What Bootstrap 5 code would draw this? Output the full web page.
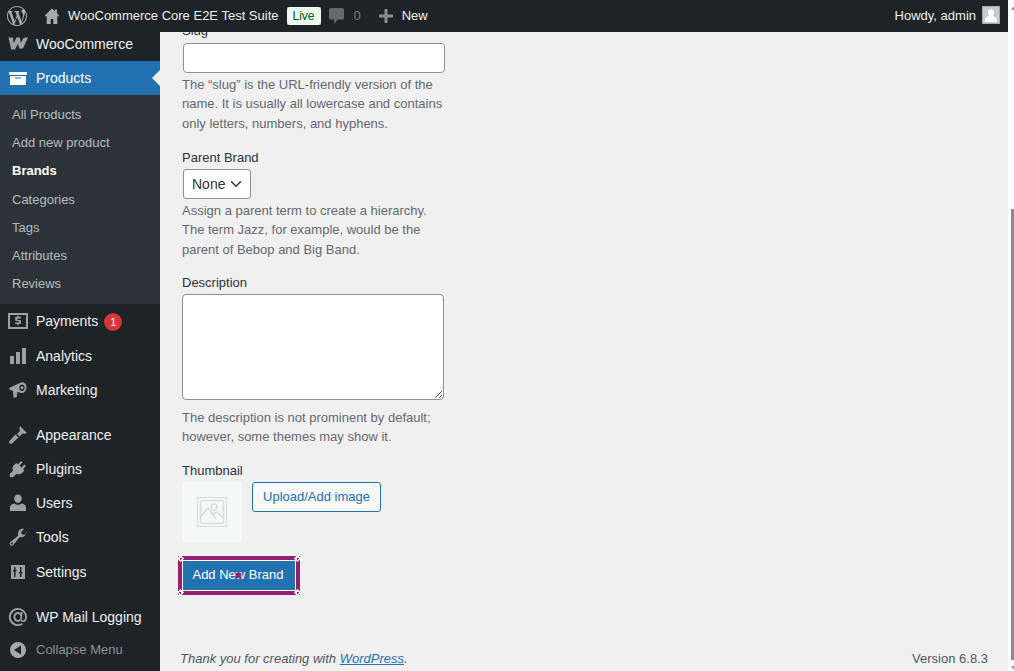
<!DOCTYPE html>
<html lang="en">
<head>
<meta charset="utf-8">
<title>Add New Brand</title>
<link href="https://cdn.jsdelivr.net/npm/bootstrap@5.3.0/dist/css/bootstrap.min.css" rel="stylesheet">
<style>
html,body{height:100%;overflow:hidden}
body{font-family:"Liberation Sans",Arial,sans-serif;font-size:13px;line-height:1.4;background:#f0f0f1;color:#3c434a}
.shell{width:1014px;height:671px}
.page{width:1008px}
.vscroll{width:6px;background:#fff;position:relative}
.vthumb{position:absolute;left:3px;right:0;top:209px;height:451px;background:#8a8a8a}
.varrow{position:absolute;left:3px;width:0;height:0;border-left:3px solid transparent;border-right:3px solid transparent}
.varrow-up{top:6px;border-bottom:4px solid #8a8a8a}
.varrow-down{bottom:1px;border-top:4px solid #8a8a8a}
.wpbar{height:32px;background:#1d2327;color:#f0f0f1;flex:none}
.wpbar svg{fill:#a7aaad;display:block;flex:none}
.bar-logo{margin-left:7px;margin-right:17px}
.bar-home{margin-right:8px}
.wpbar .bar-comment{fill:#646970;margin-left:8px}
.wpbar .bar-plus{fill:#8c8f94;margin-right:9px}
.bar-live{background:#edfaef;color:#005c12;font-size:12px;line-height:18px;height:18px;width:34px;border-radius:2px;text-align:center;margin-left:8px}
.bar-count{color:#787c82;margin-left:9px;margin-right:18px}
.bar-avatar{width:18px;height:18px;margin:0 8px 2px 6px}
.wpside{width:160px;background:#1d2327;flex:none;overflow:hidden}
.side-item{height:34px;color:#f0f0f1;font-size:14px;line-height:34px;text-decoration:none;position:relative}
.side-item svg{fill:#9ca1a6;width:20px;height:20px;margin:0 8px;flex:none}
.side-first{height:29px;line-height:24px;padding-bottom:5px}
.side-tall{height:35px;padding-bottom:2px}
.side-gap{margin-top:11px}
.side-settings{height:35px;padding-top:1px}
.side-current{background:#2271b1;color:#fff}
.side-current svg{fill:#fff}
.side-current::after{content:"";position:absolute;right:0;top:9px;border:8px solid transparent;border-right-color:#f0f0f1;border-left-width:0}
.side-sub{background:#2c3338;padding:6px 0;height:209px}
.side-sub a{display:block;height:28.2px;line-height:28.2px;padding-left:12px;color:rgba(240,246,252,.7);text-decoration:none;font-size:13px}
.side-sub a.side-on{color:#fff;font-weight:600}
.side-count{background:#d63638;color:#fff;font-size:11px;font-weight:400;width:18px;height:18px;line-height:18px;padding:0;margin-left:6px;margin-top:2px;border-radius:9px;text-align:center}
.side-collapse{height:30px;line-height:30px;color:#8c8f94;font-size:13px;margin-top:1px}
.side-collapse svg{fill:#a7aaad}
.wpmain{overflow:hidden;padding-left:22px;position:relative}
.term-form{width:262px;margin-top:-11px}
.term-label{color:#2c3338;font-size:13px;line-height:19.5px;margin:0;display:block}
.term-help{color:#646970;font-size:13px;line-height:19.5px;margin:0}
.term-input{display:block;width:262px;height:30px;margin:2px 0 2px 1px;border:1px solid #8c8f94;border-radius:4px;padding:0 8px;background:#fff;min-height:0;font-size:14px}
.term-select{display:block;width:68px;height:30px;margin:1px 0 2px 1px;border:1px solid #8c8f94;border-radius:3px;padding:2px 24px 0 8px;font-size:14px;color:#2c3338;background-position:right 6px center;background-size:16px 12px}
.term-text{display:block;width:262px;height:106px;margin:1px 0 8px;border:1px solid #8c8f94;border-radius:4px;padding:2px 6px;background:#fff}
.term-thumb{width:60px;height:60px;background:#f6f7f7}
.term-upload{height:30px;width:129px;margin-left:10px;padding:0;font-size:13px;line-height:28px;color:#2271b1;border:1px solid #2271b1;border-radius:3px;background:#f6f7f7}
.hl-wrap{width:122px;height:39px;border:4px solid #93216f;margin:14px 0 0 -4px;position:relative}
.hl-btn{display:block;width:100%;height:100%;padding:0 2px 2px 0;border:1px solid #fff;border-radius:0;background:#2271b1;color:#fff;font-size:13px;line-height:26px}
.hl-dot{position:absolute;left:54px;top:13px;width:5px;height:5px;background:#93216f}
.hl-corner{position:absolute;width:5px;height:5px;background:radial-gradient(circle,#93216f 0 1px,#fff 1px);transform:rotate(45deg)}
.hl-tl{left:-4px;top:-4px}.hl-tr{right:-4px;top:-4px}.hl-bl{left:-4px;bottom:-4px}.hl-br{right:-4px;bottom:-4px}
.wpfoot{position:absolute;left:20px;right:20px;bottom:3px;color:#50575e;font-size:13px;line-height:19.5px}
.wpfoot a{color:#2271b1}
</style>
</head>
<body>
<div class="shell d-flex">
  <div class="page d-flex flex-column">
    <header class="wpbar d-flex align-items-center">
      <svg class="bar-logo" width="20" height="20" viewBox="0 0 24 24"><path d="M21.469 6.825c.84 1.537 1.318 3.3 1.318 5.175 0 3.979-2.156 7.456-5.363 9.325l3.295-9.527c.615-1.54.82-2.771.82-3.864 0-.405-.026-.78-.07-1.11m-7.981.105c.647-.03 1.232-.105 1.232-.105.582-.075.514-.93-.067-.899 0 0-1.755.135-2.88.135-1.064 0-2.85-.15-2.85-.15-.585-.03-.661.855-.075.885 0 0 .54.061 1.125.09l1.68 4.605-2.37 7.08L5.354 6.9c.649-.03 1.234-.1 1.234-.1.585-.075.516-.93-.065-.896 0 0-1.746.138-2.874.138-.2 0-.438-.008-.69-.015C4.911 3.15 8.235 1.215 12 1.215c2.809 0 5.365 1.072 7.286 2.833-.046-.003-.091-.009-.141-.009-1.06 0-1.812.923-1.812 1.914 0 .89.513 1.643 1.06 2.531.411.72.89 1.643.89 2.977 0 .915-.354 1.994-.821 3.479l-1.075 3.585-3.9-11.61.001.014zM12 22.784c-1.059 0-2.081-.153-3.048-.437l3.237-9.406 3.315 9.087c.024.053.05.101.078.149-1.12.393-2.325.609-3.582.609M1.211 12c0-1.564.336-3.05.935-4.39L7.29 21.709C3.694 19.96 1.212 16.271 1.211 12M12 0C5.385 0 0 5.385 0 12s5.385 12 12 12 12-5.385 12-12S18.615 0 12 0"/></svg>
      <svg class="bar-home" width="16" height="16" viewBox="0 0 16 16"><path d="M8 0.500 0.800 7.500l1 1 .9-.8V16h4v-5h2.600v5h4V7.700l.9.8 1-1L13 5.300V1.500h-2v1.800z"/></svg>
      <span>WooCommerce Core E2E Test Suite</span>
      <span class="bar-live">Live</span>
      <svg class="bar-comment" width="16" height="18" viewBox="0 0 16 18"><path d="M1.500 1h12a1.500 1.500 0 0 1 1.500 1.500v8.500a1.500 1.500 0 0 1-1.500 1.500H9L5 17v-4.500H1.500A1.500 1.500 0 0 1 0 11V2.500A1.500 1.500 0 0 1 1.500 1z"/></svg>
      <span class="bar-count">0</span>
      <svg class="bar-plus" width="14" height="14" viewBox="0 0 14 14"><path d="M5.500 0h3v5.500H14v3H8.500V14h-3V8.500H0v-3h5.500z"/></svg>
      <span>New</span>
      <span class="ms-auto">Howdy, admin</span>
      <svg class="bar-avatar" width="18" height="18" viewBox="0 0 18 18"><rect width="18" height="18" fill="#a7aaad"/><rect x="1" y="1" width="16" height="16" fill="#c9c9c9"/><path fill="#fff" d="M9 3.500a3 3 0 0 1 3 3.200c0 1.300-.7 2.400-1.300 3 .2.800 3.300 1.300 4.300 3.300v3H3v-3c1-2 4.100-2.500 4.300-3.300-.6-.6-1.300-1.700-1.300-3a3 3 0 0 1 3-3.200z"/></svg>
    </header>
    <div class="d-flex flex-grow-1" style="min-height:0">
      <nav class="wpside d-flex flex-column">
        <a class="side-item side-first d-flex align-items-center" href="#"><svg viewBox="0 0 20 20"><path d="M.5 3.500h4.300l1 5.700 2.600-5.700h3.500l.9 5.700 1.700-3.700c.6-1.300 1.600-2 3-2h2.500l-5 11h-3.800L10 9.500 7 15.500H3.200z"/></svg>WooCommerce</a>
        <a class="side-item side-current d-flex align-items-center" href="#"><svg viewBox="0 0 20 20"><path fill-rule="evenodd" d="M1 4h18v3H1zM2 8h16v9H2zm5 1.500v1h6v-1z"/></svg>Products</a>
        <div class="side-sub">
          <a href="#">All Products</a>
          <a href="#">Add new product</a>
          <a class="side-on" href="#">Brands</a>
          <a href="#">Categories</a>
          <a href="#">Tags</a>
          <a href="#">Attributes</a>
          <a href="#">Reviews</a>
        </div>
        <a class="side-item side-tall d-flex align-items-center" href="#"><svg viewBox="0 0 20 20"><path fill-rule="evenodd" d="M0 2h20v16H0zm2 2v12h16V4z"/><path d="M9.300 4.700h1.400v1.100h2.200v1.600H9.400v1.500h2.700c.5 0 .8.300.8.800v2.500c0 .5-.3.800-.8.800h-1.400v1.200H9.300v-1.200H7.100v-1.600h3.500V9.900H7.900c-.5 0-.8-.3-.8-.8V6.600c0-.5.300-.8.800-.8h1.400z"/></svg>Payments<span class="badge side-count">1</span></a>
        <a class="side-item d-flex align-items-center" href="#"><svg viewBox="0 0 20 20"><path d="M2 10h4v8H2zM8 6h4v12H8zM14 2h4v16h-4z"/></svg>Analytics</a>
        <a class="side-item d-flex align-items-center" href="#"><svg viewBox="0 0 20 20"><path fill-rule="evenodd" d="M1 8l12-5.500c3.500-.8 5.500 2 5.500 5s-2 6-5.500 5.500l-3.500-1.200-1 5.700H5.500L5 10.700 2 10zM14 4.500c-1.600 0-2.700 1.400-2.700 3.200s1.100 3.300 2.700 3.300 2.700-1.500 2.700-3.300-1.100-3.200-2.700-3.200z"/><circle cx="14" cy="7.700" r="1.500"/></svg>Marketing</a>
        <a class="side-item side-gap d-flex align-items-center" href="#"><svg viewBox="0 0 20 20"><path d="M12 1l7 7-3 1-1.500-.5-3 3-2.500-2.500 3-3-.6-2zM7.500 9.500l3 3-6.500 6c-1 .6-2 .2-2.500-.3-.5-.6-.6-1.500 0-2.200z"/></svg>Appearance</a>
        <a class="side-item d-flex align-items-center" href="#"><svg viewBox="0 0 20 20"><path d="M13 2l1.500 1.500-3 3 2 2 3-3L18 7l-3 3 1.500 1.500-2.500 2.500c-1.500 1.500-3.800 1.700-5.500.7L5 18.200l-3-.2-.3-3 3.500-3.500c-1-1.700-.8-4 .7-5.500L8.500 4 10 5.500z"/></svg>Plugins</a>
        <a class="side-item d-flex align-items-center" href="#"><svg viewBox="0 0 20 20"><path d="M10 1.500c2.200 0 3.800 1.700 3.800 4s-1.600 4.500-3.800 4.500-3.800-2.200-3.800-4.500 1.600-4 3.800-4zM6.500 10.500c1 .8 2.200 1.300 3.500 1.300s2.500-.5 3.500-1.300c2.500.5 4.500 1.700 4.500 4v3.500H2v-3.500c0-2.300 2-3.500 4.500-4z"/></svg>Users</a>
        <a class="side-item d-flex align-items-center" href="#"><svg viewBox="0 0 20 20"><path fill-rule="evenodd" d="M18 5.500c0 2.700-2.200 4.800-4.800 4.800-.6 0-1-.1-1.500-.2l-6.400 7.800c-.8.900-2.200 1-3 .2-.9-.8-.8-2.200.1-3l7.700-6.400c-.1-.5-.2-1-.2-1.500C9.900 4 12 1.800 14.700 1.800c.6 0 1 .1 1.400.2l-3 3 .8 2.300 2.300.8 3-3c.1.100-.9.100-1.200.4zM4 15.500a1 1 0 1 0 0 2 1 1 0 0 0 0-2z"/></svg>Tools</a>
        <a class="side-item side-settings d-flex align-items-center" href="#"><svg viewBox="0 0 20 20"><path fill-rule="evenodd" d="M3 3h14v14H3zm3 2v3H5v1.500h1V15h1.500V9.500h1V8h-1V5zm6 0v5h-1v1.500h1V15h1.500v-3.500h1V10h-1V5z"/></svg>Settings</a>
        <a class="side-item side-gap d-flex align-items-center" href="#"><svg viewBox="0 0 20 20"><path fill-rule="evenodd" d="M10 1a9 9 0 0 1 9 9c0 3-1.500 5-3.800 5-1.300 0-2.200-.7-2.500-1.700-.8 1-1.800 1.600-3 1.600-2.400 0-4.200-2-4.200-4.800S7.400 5 9.900 5c1 0 2 .5 2.600 1.300l.2-1h2l-1 6.300c-.2 1.100.2 1.800 1.200 1.800 1.200 0 2.300-1.400 2.300-3.400a7.200 7.200 0 1 0-3.200 6l.8 1.500A9 9 0 1 1 10 1zM10 7c-1.500 0-2.600 1.300-2.600 3s1.100 3 2.500 3 2.600-1.300 2.600-3-1.100-3-2.500-3z"/></svg>WP Mail Logging</a>
        <a class="side-item side-collapse d-flex align-items-center" href="#"><svg viewBox="0 0 20 20"><path fill-rule="evenodd" d="M10 2a8 8 0 1 1 0 16 8 8 0 0 1 0-16zm3 3.500L6 10l7 4.500z"/></svg>Collapse Menu</a>
      </nav>
      <main class="wpmain flex-grow-1">
        <form class="term-form">
          <label class="term-label">Slug</label>
          <input class="form-control term-input" type="text">
          <p class="term-help">The “slug” is the URL-friendly version of the name. It is usually all lowercase and contains only letters, numbers, and hyphens.</p>
          <label class="term-label" style="margin-top:15px">Parent Brand</label>
          <select class="form-select term-select"><option>None</option></select>
          <p class="term-help">Assign a parent term to create a hierarchy. The term Jazz, for example, would be the parent of Bebop and Big Band.</p>
          <label class="term-label" style="margin-top:14px">Description</label>
          <textarea class="form-control term-text"></textarea>
          <p class="term-help">The description is not prominent by default; however, some themes may show it.</p>
          <label class="term-label" style="margin-top:14px">Thumbnail</label>
          <div class="d-flex align-items-start" style="margin-top:2px">
            <div class="term-thumb d-flex align-items-center justify-content-center">
              <svg width="30" height="30" viewBox="0 0 30 30" fill="none" stroke="#dcdcde"><rect x=".5" y=".5" width="29" height="29" stroke-width="1"/><rect x="3.500" y="3.500" width="23" height="23" rx="2" stroke-width="1.500"/><circle cx="17" cy="10" r="3" stroke-width="1.500"/><path d="M4 19l7-8 8 11M15 18l5-3 6 6" stroke-width="1.500"/></svg>
            </div>
            <button type="button" class="btn term-upload">Upload/Add image</button>
          </div>
          <div class="hl-wrap">
            <button type="button" class="btn hl-btn">Add New Brand</button>
            <span class="hl-dot"></span>
            <span class="hl-corner hl-tl"></span><span class="hl-corner hl-tr"></span><span class="hl-corner hl-bl"></span><span class="hl-corner hl-br"></span>
          </div>
        </form>
        <footer class="wpfoot d-flex justify-content-between">
          <span class="fst-italic">Thank you for creating with <a href="#">WordPress</a>.</span>
          <span>Version 6.8.3</span>
        </footer>
      </main>
    </div>
  </div>
  <div class="vscroll flex-grow-1"><span class="varrow varrow-up"></span><span class="vthumb"></span><span class="varrow varrow-down"></span></div>
</div>
<script src="https://cdn.jsdelivr.net/npm/bootstrap@5.3.0/dist/js/bootstrap.bundle.min.js"></script>
</body>
</html>
